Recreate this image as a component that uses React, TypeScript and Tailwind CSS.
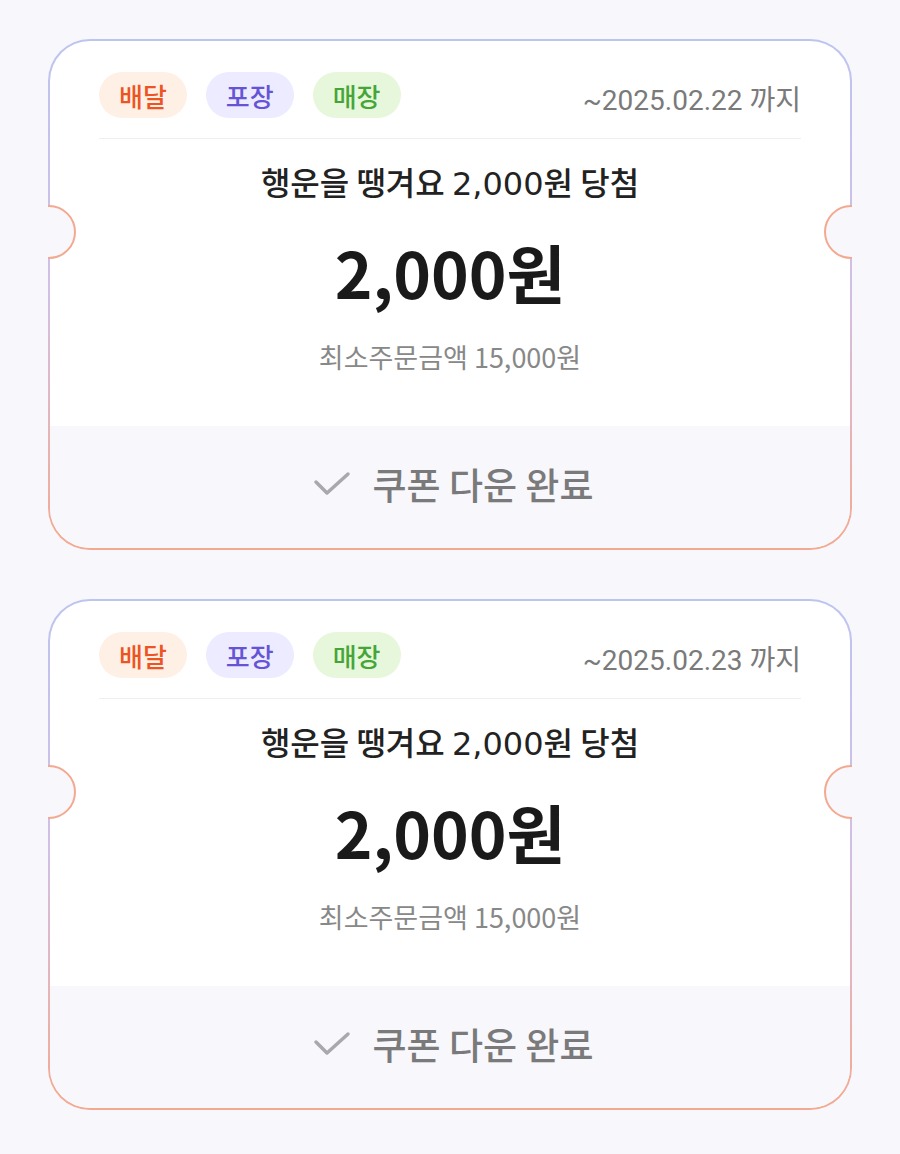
import React from 'react';

const coupons = [
  { date: '~2025.02.22 까지' },
  { date: '~2025.02.23 까지' },
];

const tags = [
  { label: '배달', className: 'bg-[#fff0e6] text-[#ec5424]' },
  { label: '포장', className: 'bg-[#ecebff] text-[#6554d6]' },
  { label: '매장', className: 'bg-[#e7f7dc] text-[#45a637]' },
];

function CheckIcon() {
  return (
    <svg width="38" height="28" viewBox="0 0 38 28" fill="none">
      <polyline
        points="3,11 14,22 35,3"
        stroke="#a9a9ad"
        strokeWidth="3.5"
        strokeLinecap="round"
        strokeLinejoin="round"
      />
    </svg>
  );
}

function CouponCard({ date }: { date: string }) {
  return (
    <div className="relative overflow-hidden rounded-[42px] bg-linear-to-b from-[#bcc4f0] via-[#d2bfe4] to-[#f3a98f] p-[2px]">
      <div className="overflow-hidden rounded-[40px] bg-white">
        <div className="px-[49px] pt-[31px] pb-[52px]">
          <div className="flex items-end justify-between">
            <div className="flex gap-[19px]">
              {tags.map((t) => (
                <span
                  key={t.label}
                  className={`flex h-[46px] items-center rounded-full px-[20px] text-[26px] font-medium ${t.className}`}
                >
                  {t.label}
                </span>
              ))}
            </div>
            <span className="text-[28px] leading-[34px] text-[#7a7a7a] [font-family:Roboto,'Noto_Sans_CJK_KR',sans-serif]">
              {date}
            </span>
          </div>
          <div className="mt-[20px] h-px bg-[#efeef5]" />
          <p className="mt-[22px] text-center text-[32px] leading-[40px] font-medium text-[#222]">
            행운을 땡겨요{' '}
            <span className="font-normal [font-family:'DejaVu_Sans',sans-serif]">2,000</span>원 당첨
          </p>
          <p className="mt-[29px] text-center text-[64px] leading-[77px] font-bold text-[#1a1a1a]">
            2,000원
          </p>
          <p className="mt-[29px] text-center text-[27px] leading-[35px] text-[#888]">
            최소주문금액 15,000원
          </p>
        </div>
        <div className="flex h-[122px] items-center justify-center gap-[22px] bg-[#f8f7fc] pb-[4px] pl-[6px]">
          <CheckIcon />
          <span className="text-[37px] font-medium text-[#7a7a7a]">쿠폰 다운 완료</span>
        </div>
      </div>
      <div className="absolute top-[166px] left-[-26px] h-[54px] w-[54px] rounded-full border-2 border-[#f3a98f] bg-[#f8f7fc]" />
      <div className="absolute top-[166px] right-[-26px] h-[54px] w-[54px] rounded-full border-2 border-[#f3a98f] bg-[#f8f7fc]" />
    </div>
  );
}

export default function App() {
  return (
    <div className="min-h-screen bg-[#f8f7fc] px-[48px] pt-[39px] pb-[46px] [font-family:'Noto_Sans_CJK_KR',sans-serif]">
      <div className="flex flex-col gap-[49px]">
        {coupons.map((c) => (
          <CouponCard key={c.date} date={c.date} />
        ))}
      </div>
    </div>
  );
}
